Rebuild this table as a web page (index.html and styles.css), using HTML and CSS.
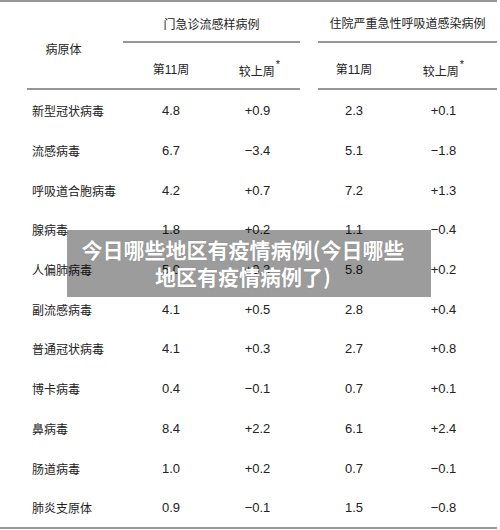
FILE: index.html
```html
<!DOCTYPE html>
<html lang="zh-CN">
<head>
<meta charset="utf-8">
<title>今日哪些地区有疫情病例</title>
<link rel="stylesheet" href="styles.css">
</head>
<body>
<div class="page">
  <div class="table">
    <div class="h-name">病原体</div>
    <div class="h-group g1">门急诊流感样病例</div>
    <div class="h-group g2">住院严重急性呼吸道感染病例</div>
    <div class="h-sub c1">第11周</div>
    <div class="h-sub c2">较上周<sup>*</sup></div>
    <div class="h-sub c3">第11周</div>
    <div class="h-sub c4">较上周<sup>*</sup></div>

    <div class="name">新型冠状病毒</div><div class="v c1">4.8</div><div class="v c2">+0.9</div><div class="v c3">2.3</div><div class="v c4">+0.1</div>
    <div class="name">流感病毒</div><div class="v c1">6.7</div><div class="v c2">−3.4</div><div class="v c3">5.1</div><div class="v c4">−1.8</div>
    <div class="name">呼吸道合胞病毒</div><div class="v c1">4.2</div><div class="v c2">+0.7</div><div class="v c3">7.2</div><div class="v c4">+1.3</div>
    <div class="name">腺病毒</div><div class="v c1">1.8</div><div class="v c2">+0.2</div><div class="v c3">1.1</div><div class="v c4">−0.4</div>
    <div class="name">人偏肺病毒</div><div class="v c1">5.0</div><div class="v c2">+0.3</div><div class="v c3">5.8</div><div class="v c4">+0.2</div>
    <div class="name">副流感病毒</div><div class="v c1">4.1</div><div class="v c2">+0.5</div><div class="v c3">2.8</div><div class="v c4">+0.4</div>
    <div class="name">普通冠状病毒</div><div class="v c1">4.1</div><div class="v c2">+0.3</div><div class="v c3">2.7</div><div class="v c4">+0.8</div>
    <div class="name">博卡病毒</div><div class="v c1">0.4</div><div class="v c2">−0.1</div><div class="v c3">0.7</div><div class="v c4">+0.1</div>
    <div class="name">鼻病毒</div><div class="v c1">8.4</div><div class="v c2">+2.2</div><div class="v c3">6.1</div><div class="v c4">+2.4</div>
    <div class="name">肠道病毒</div><div class="v c1">1.0</div><div class="v c2">+0.2</div><div class="v c3">0.7</div><div class="v c4">−0.1</div>
    <div class="name">肺炎支原体</div><div class="v c1">0.9</div><div class="v c2">−0.1</div><div class="v c3">1.5</div><div class="v c4">−0.8</div>
  </div>
  <div class="banner">今日哪些地区有疫情病例(今日哪些地区有疫情病例了)</div>
</div>
</body>
</html>
```
FILE: styles.css
```css
html, body {
  margin: 0;
  padding: 0;
  background: #ffffff;
}
.page {
  position: relative;
  width: 500px;
  height: 530px;
  overflow: hidden;
  font-family: "Liberation Sans", "Noto Sans CJK SC", sans-serif;
  color: #222222;
}
.table {
  width: 497px;
  display: grid;
  grid-template-columns: 123px 96px 81px 18px 72px 107px;
  grid-template-rows: 41px 47px repeat(11, 39.7px);
  border-top: 2px solid #979797;
  border-bottom: 2px solid #979797;
}
.h-name {
  grid-row: 1 / span 2;
  grid-column: 1;
  margin-left: 27px;
  padding: 6px 23px 0 0;
  border-bottom: 2px solid #979797;
  display: flex;
  align-items: center;
  justify-content: center;
  font-size: 12px;
}
.h-group {
  grid-row: 1;
  display: flex;
  align-items: center;
  justify-content: center;
  padding-top: 1px;
  border-bottom: 2px solid #979797;
  font-size: 12px;
}
.h-group.g1 { grid-column: 2 / span 2; padding-top: 4px; }
.h-group.g2 { grid-column: 5 / span 2; }
.h-sub {
  grid-row: 2;
  display: flex;
  align-items: center;
  justify-content: center;
  padding-top: 6px;
  border-bottom: 2px solid #979797;
  font-size: 12px;
}
.h-sub.c2, .h-sub.c4 { padding-top: 9px; }
.h-sub sup {
  font-size: 11px;
  line-height: 0;
  position: relative;
  top: -6px;
  margin-left: 1px;
}
.c1 { grid-column: 2; }
.c2 { grid-column: 3; }
.c3 { grid-column: 5; }
.c4 { grid-column: 6; }
.name {
  grid-column: 1;
  display: flex;
  align-items: center;
  padding-left: 32px;
  padding-top: 2px;
  font-size: 12px;
  white-space: nowrap;
}
.v {
  display: flex;
  align-items: center;
  justify-content: center;
  padding-top: 2px;
  font-size: 13px;
}
.v.c2 { padding-right: 4px; }
.banner {
  position: absolute;
  left: 67px;
  top: 230px;
  width: 364px;
  height: 67px;
  box-sizing: border-box;
  padding: 6px 20px 0 8px;
  background: rgba(0, 0, 0, 0.39);
  color: #ffffff;
  font-family: "Noto Sans CJK SC", sans-serif;
  font-weight: 700;
  font-size: 21px;
  line-height: 27px;
  text-align: center;
  text-shadow: 0 0 1px rgba(0,0,0,0.25);
}
```
